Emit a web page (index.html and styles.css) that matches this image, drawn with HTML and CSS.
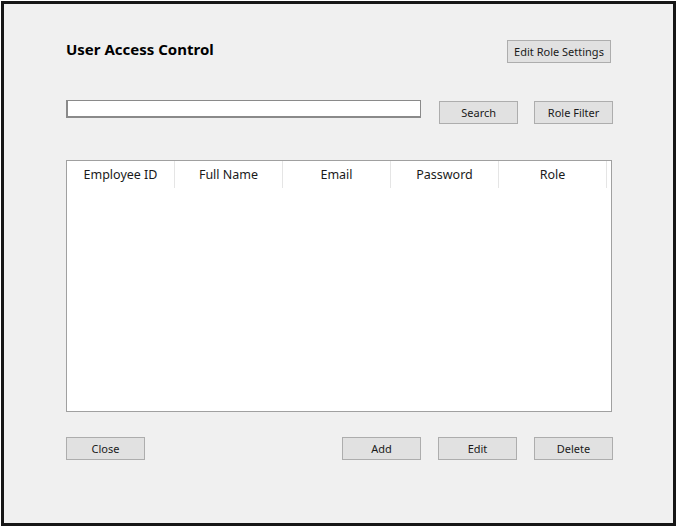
FILE: index.html
```html
<!DOCTYPE html>
<html>
<head>
<meta charset="utf-8">
<link rel="stylesheet" href="styles.css">
</head>
<body>
<div class="window">
  <div class="row top-row">
    <h1 class="title">User Access Control</h1>
    <button class="btn btn-wide">Edit Role Settings</button>
  </div>
  <div class="row search-row">
    <input class="search-input" type="text">
    <button class="btn btn-search">Search</button>
    <button class="btn btn-filter">Role Filter</button>
  </div>
  <div class="table">
    <div class="thead">
      <div class="th">Employee ID</div>
      <div class="th">Full Name</div>
      <div class="th">Email</div>
      <div class="th">Password</div>
      <div class="th">Role</div>
    </div>
  </div>
  <div class="row bottom-row">
    <button class="btn">Close</button>
    <div class="actions">
      <button class="btn">Add</button>
      <button class="btn">Edit</button>
      <button class="btn">Delete</button>
    </div>
  </div>
</div>
</body>
</html>
```

FILE: styles.css
```css
* { box-sizing: border-box; }
html, body { margin: 0; padding: 0; background: #ffffff; }
body { font-family: "Noto Sans", "Open Sans", sans-serif; color: #1a1a1a; }

.window {
  margin: 1px 0 0 1px;
  width: 675px;
  height: 525px;
  border: 3px solid #161616;
  background: #f0f0f0;
  padding: 36px 60px 0 62px;
}

.row { display: flex; }

.top-row {
  justify-content: space-between;
  align-items: flex-start;
  height: 23px;
  width: 546px;
  padding-right: 1px;
}
.title {
  margin: 0;
  font-size: 15px;
  font-weight: 700;
  line-height: 18px;
  color: #000;
}

.btn {
  font-family: inherit;
  font-size: 11px;
  color: #1a1a1a;
  background: #e1e1e1;
  border: 1px solid #adadad;
  border-radius: 0;
  height: 23px;
  width: 79px;
  padding: 0;
  line-height: 20px;
}
.btn-wide { width: 104px; }

.search-row {
  margin-top: 37px;
  align-items: flex-start;
}
.search-input {
  width: 356px;
  height: 18px;
  border: 1px solid #8a8a8a;
  border-left-width: 2px;
  border-bottom-width: 2px;
  background: #fff;
  margin: 0;
  padding: 0;
}
.btn-search { margin: 1px 0 0 18px; }
.btn-filter { margin: 1px 0 0 16px; }

.table {
  margin-top: 36px;
  width: 546px;
  height: 252px;
  border: 1px solid #a0a0a0;
  background: #fff;
}
.thead {
  display: flex;
  height: 27px;
}
.th {
  width: 108px;
  border-right: 1px solid #e5e5e5;
  text-align: center;
  font-size: 12.5px;
  line-height: 27px;
  color: #1a1a1a;
}

.bottom-row {
  margin-top: 25px;
  justify-content: space-between;
  width: 547px;
}
.actions { display: flex; gap: 17px; }
```
